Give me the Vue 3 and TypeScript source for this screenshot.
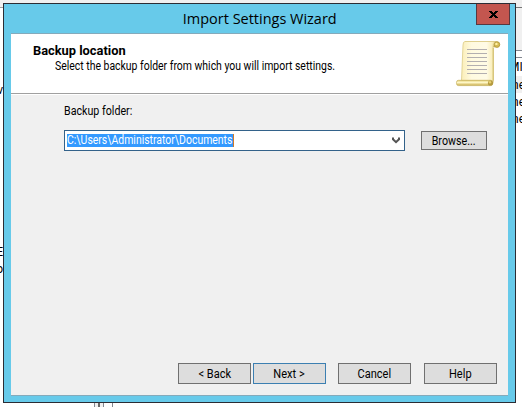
<script setup lang="ts">
import { ref } from 'vue'

interface WizardButton { id: string; label: string }

const folder = ref<string>('C:\\Users\\Administrator\\Documents')
const buttons: WizardButton[] = [
  { id: 'back', label: '< Back' },
  { id: 'next', label: 'Next >' },
  { id: 'cancel', label: 'Cancel' },
  { id: 'help', label: 'Help' },
]
const rows: string[] = ['ne', 'ne', 'ne']
</script>

<template>
  <div class="desktop">
    <div class="behind behind-left">
      <span class="frag f1">v</span>
      <span class="frag f2">E</span>
      <span class="frag f3">o</span>
    </div>
    <div class="behind behind-right">
      <div class="toolbar"></div>
      <div class="gap"></div>
      <div class="head">MI</div>
      <div v-for="(row, i) in rows" :key="i" class="row">{{ row }}</div>
    </div>
    <div class="splitter"></div>

    <section class="dialog">
      <header class="titlebar">
        <span class="title">Import Settings Wizard</span>
        <button class="close" aria-label="Close">
          <svg width="9" height="7" viewBox="0 0 9 7" shape-rendering="crispEdges">
            <path d="M0 0h3v1h1v1h1V1h1V0h3v1H8v1H7v1H6v1h1v1h1v1h1v1H6V6H5V5H4v1H3v1H0V6h1V5h1V4h1V3H2V2H1V1H0z" />
          </svg>
        </button>
      </header>
      <div class="client">
        <div class="banner">
          <div class="heading">
            <h1><span>Backup location</span></h1>
            <p><span>Select the backup folder from which you will import settings.</span></p>
          </div>
          <svg class="scroll" width="46" height="48" viewBox="0 0 46 48">
            <defs>
              <linearGradient id="paper" x1="0" y1="0" x2="1" y2="0">
                <stop offset="0" stop-color="#fbeeb8" />
                <stop offset=".3" stop-color="#fffae0" />
                <stop offset=".75" stop-color="#fffbe6" />
                <stop offset="1" stop-color="#f7e8a6" />
              </linearGradient>
              <linearGradient id="roll" x1="0" y1="0" x2="0" y2="1">
                <stop offset="0" stop-color="#e6d277" />
                <stop offset=".4" stop-color="#fff8c9" />
                <stop offset="1" stop-color="#c7aa45" />
              </linearGradient>
            </defs>
            <path d="M10 1.500h31q3.500 0 3.500 3t-4 2.500h-4z" fill="url(#roll)" stroke="#cdb869" stroke-width=".7" />
            <path d="M10 1.500h30q-2 1-2 5v34H6.500L8 5q0-3.500 2-3.500z" fill="url(#paper)" stroke="#dccb86" stroke-width=".8" />
            <path d="M38.300 8v32q0 4-2 5" fill="none" stroke="#d2bd69" />
            <circle cx="42" cy="4.600" r="2.800" fill="#d5bc54" stroke="#ad923a" stroke-width=".7" />
            <circle cx="41.400" cy="3.900" r="1.200" fill="#fff0a3" />
            <rect x="1.500" y="40.300" width="36" height="5.300" rx="2" fill="url(#roll)" stroke="#c6b05d" stroke-width=".7" />
            <circle cx="35.500" cy="43" r="2.600" fill="#b49a3f" />
            <circle cx="35" cy="42.200" r="1.200" fill="#e8d170" />
            <path d="M12 9.500h20M12 13.500h20M12 17.500h20M12 21.500h20M12 25.500h20M12 29.500h20M12 33.500h20" stroke="#b3afb0" />
          </svg>
        </div>
        <main class="body">
          <label class="label"><span>Backup folder:</span></label>
          <div class="picker">
            <div class="combo">
              <span class="selected"><span>{{ folder }}</span></span>
              <svg class="chevron" width="8" height="7" viewBox="0 0 8 7"><path d="M1 .5v1.800L4 5.200l3-2.900V.5" fill="none" stroke="#555" stroke-width="2" /></svg>
            </div>
            <button class="btn browse"><span>Browse...</span></button>
          </div>
        </main>
        <footer class="actions">
          <button v-for="b in buttons" :key="b.id" class="btn" :class="b.id"><span>{{ b.label }}</span></button>
        </footer>
      </div>
    </section>
  </div>
</template>

<style>
body { margin: 0; overflow: hidden; }
</style>

<style scoped>
* { box-sizing: border-box; }
.desktop { position: relative; width: 522px; height: 407px; padding: 3px; overflow: hidden; background: #fff; font: 12px/14px Roboto, "Liberation Sans", sans-serif; color: #000; }
.desktop::before { content: ""; position: absolute; inset: 0 0 auto; height: 7px; background: #f0f0f0; border-bottom: 1px solid #a0a0a0; }
.behind { position: absolute; top: 0; height: 407px; overflow: hidden; }
.behind-left { left: 0; width: 3px; }
.frag { position: absolute; right: 0; }
.f1 { top: 83px; }
.f2 { top: 245px; }
.f3 { top: 262px; }
.behind-right { left: 516px; width: 6px; }
.toolbar { height: 51px; background: linear-gradient(#777, #777) 0 7px / 100% 1px no-repeat #f0f0f0; border-bottom: 1px solid #828790; }
.gap { height: 7px; border-bottom: 1px solid #828790; }
.head, .row { height: 17px; line-height: 19px; text-indent: -4px; }
.head { height: 18px; text-indent: -7px; }
.row:nth-of-type(4) { background: #f0f0f0; }
.splitter { position: absolute; left: 94px; top: 403px; width: 19px; height: 4px; background: linear-gradient(90deg, #828790 1px, #f0f0f0 1px 4px, #696969 4px 6px, #f0f0f0 6px 9px, #828790 9px 10px, #fff 10px 18px, #828790 18px); }
.dialog { position: relative; width: 513px; height: 400px; padding: 0 7px 7px; border: 1px solid #2b2c34; background: #67caea; }
.titlebar { position: relative; display: flex; justify-content: center; height: 29px; }
.title { font: 15px/29px "Open Sans", sans-serif; white-space: nowrap; transform: scaleX(.965); }
.close { position: absolute; right: -2px; top: 0; width: 34px; height: 21px; padding: 0; display: flex; align-items: center; justify-content: center; border: 1px solid #573840; border-top: 0; background: #c3564f; }
.client { display: flex; flex-direction: column; width: 497px; height: 363px; border-top: 1px solid #84aabb; border-bottom: 1px solid #84aabb; background: #f0f0f0; }
.banner { display: flex; justify-content: space-between; height: 61px; padding: 0 7px 0 22px; background: #fff; border-bottom: 1px solid #fff; box-shadow: inset 0 -1px #a0a0a0; }
.heading { padding-top: 10px; }
h1 { margin: 0; font: bold 12px/14px Roboto, sans-serif; }
p { margin: 1px 0 0 22px; }
p, .label, h1 { white-space: nowrap; }
h1 span, p span, .label span, .selected span { display: inline-block; transform-origin: 0 50%; }
h1 span { transform: scaleX(1.07); }
p span { transform: scaleX(.87); }
.label span { transform: scaleX(.89); }
.scroll { margin-top: 6px; }
.body { flex: 1; padding: 9px 21px 0 53px; }
.label { display: block; }
.picker { display: flex; align-items: center; justify-content: space-between; margin-top: 12px; }
.combo { display: flex; align-items: center; justify-content: space-between; width: 341px; height: 21px; padding: 0 4px 0 2px; border: 1px solid #33628a; background: #fff; }
.selected { width: 167px; height: 13px; line-height: 13px; background: #3399ff; color: #fff; border-right: 1px solid #d07a28; white-space: nowrap; }
.selected span { transform: scaleX(.87); }
.btn { width: 73px; height: 21px; padding: 0; border: 1px solid #707070; background: #ddd; font: inherit; color: #000; }
.btn span { display: inline-block; transform: scaleX(.92); }
.browse { width: 66px; height: 19px; }
.browse span { transform: scaleX(.89); }
.actions { display: flex; padding: 0 11px 11px 167px; }
.next { margin-left: 2px; border-color: #3c7fb1; }
.cancel { margin-left: 12px; }
.help { margin-left: 13px; }
</style>
